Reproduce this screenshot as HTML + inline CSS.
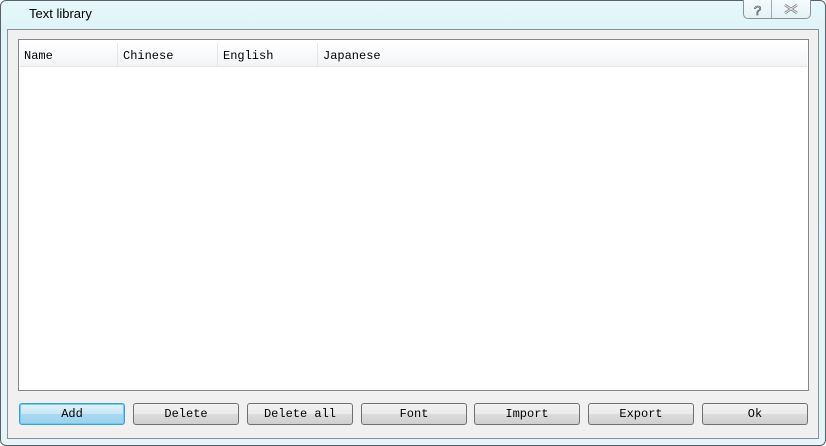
<!DOCTYPE html>
<html><head><style>
*{margin:0;padding:0;box-sizing:border-box}
body{width:826px;height:446px;background:#fff;position:relative;overflow:hidden;font-family:"Liberation Mono",monospace}
.win{position:absolute;left:0;top:0;width:826px;height:446px;border:1px solid #5a6066;border-radius:6px;background:linear-gradient(#e6f8fb,#dff3f8 30px,#e4f4f8);}
.title{position:absolute;left:29px;top:6px;font:13px "Liberation Sans",sans-serif;color:#000}
.panel{position:absolute;left:7px;top:29px;width:812px;height:410px;background:#f0f0f0;border:1px solid #8a9298}
.list{position:absolute;left:18px;top:39px;width:791px;height:352px;background:#fff;border:1px solid #828790}
.hdr{position:absolute;left:1px;top:3px;right:1px;height:24px;background:linear-gradient(#fff,#f3f4f6);border-bottom:1px solid #e3e5e8;font-size:12px}
.hdr span{position:absolute;top:6px;height:18px}
.hdr i{position:absolute;top:0;width:1px;height:23px;background:#e3e5e8}
.btn{position:absolute;top:403px;width:106px;height:22px;border:1px solid #707070;border-radius:3px;background:linear-gradient(#f2f2f2 0,#ebebeb 50%,#dddddd 51%,#cfcfcf);font-size:12px;text-align:center;line-height:21px}
.btn.def{border-color:#3c9fd7;background:linear-gradient(#e5f4fc,#c4e5f6 50%,#a9d9f2 51%,#9ad2ef);box-shadow:inset 0 0 0 1px #6fcaf0}
.cap{position:absolute;top:0;left:743px;width:68px;height:19px;border:1px solid #8a9298;border-top:none;border-radius:0 0 5px 5px;background:linear-gradient(#f4fbfd,#e3f2f7)}
.cap .sep{position:absolute;left:27px;top:0;width:1px;height:18px;background:#a0a8b0}
</style></head><body>
<div class="win"></div>
<div class="title">Text library</div>
<div class="cap"><div class="sep"></div>
<svg width="68" height="19" style="position:absolute;left:0;top:0"><text x="10" y="15" font-family="Liberation Sans" font-size="13" fill="#fff" stroke="#333" stroke-width="0.6">?</text><path d="M41 5 L53 13 M53 5 L41 13" stroke="#777" stroke-width="2.5"/><path d="M41 5 L53 13 M53 5 L41 13" stroke="#f4f4f4" stroke-width="1"/></svg></div>
<div class="panel"></div>
<div class="list"><div class="hdr">
<span style="left:4px">Name</span><i style="left:97px"></i>
<span style="left:103px">Chinese</span><i style="left:197px"></i>
<span style="left:203px">English</span><i style="left:297px"></i>
<span style="left:303px">Japanese</span>
</div></div>
<div class="btn def" style="left:19px">Add</div>
<div class="btn" style="left:133px">Delete</div>
<div class="btn" style="left:247px">Delete all</div>
<div class="btn" style="left:361px">Font</div>
<div class="btn" style="left:474px">Import</div>
<div class="btn" style="left:588px">Export</div>
<div class="btn" style="left:702px">Ok</div>
</body></html>
